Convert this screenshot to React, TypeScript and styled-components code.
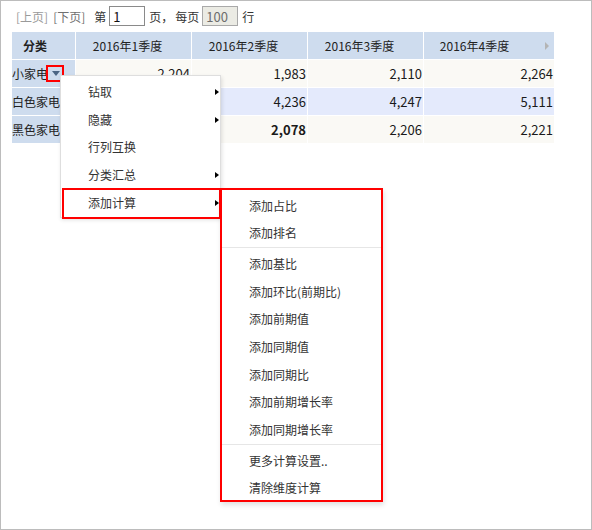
import React from "react";
import styled, { createGlobalStyle } from "styled-components";

const GlobalStyle = createGlobalStyle`
  html, body {
    margin: 0;
    padding: 0;
    background: #fff;
  }
  body {
    font-family: "Noto Sans CJK SC", "Noto Sans", sans-serif;
    font-size: 12px;
    color: #333;
  }
`;

type Tone = "cream" | "blue";

type DataRow = {
  name: string;
  values: string[];
  tone: Tone;
  boldAt?: number;
};

type MenuEntry = {
  label: string;
  hasSub?: boolean;
  active?: boolean;
};

const quarters = ["2016年1季度", "2016年2季度", "2016年3季度", "2016年4季度"];

const rows: DataRow[] = [
  { name: "小家电", values: ["2,204", "1,983", "2,110", "2,264"], tone: "cream" },
  { name: "白色家电", values: ["4,018", "4,236", "4,247", "5,111"], tone: "blue" },
  { name: "黑色家电", values: ["2,137", "2,078", "2,206", "2,221"], tone: "cream", boldAt: 1 },
];

const menuEntries: MenuEntry[] = [
  { label: "钻取", hasSub: true },
  { label: "隐藏", hasSub: true },
  { label: "行列互换" },
  { label: "分类汇总", hasSub: true },
  { label: "添加计算", hasSub: true, active: true },
];

const calcGroups = [
  ["添加占比", "添加排名"],
  ["添加基比", "添加环比(前期比)", "添加前期值", "添加同期值", "添加同期比", "添加前期增长率", "添加同期增长率"],
  ["更多计算设置..", "清除维度计算"],
];

const toneColors: Record<Tone, string> = {
  cream: "#faf9f5",
  blue: "#e4eafc",
};

const Frame = styled.div`
  position: relative;
  box-sizing: border-box;
  width: 592px;
  height: 530px;
  border: 1px solid #bcbcbc;
  padding: 5px 0 0 11px;
`;

const Pager = styled.div`
  display: flex;
  align-items: center;
  height: 20px;
  padding-left: 4px;
  white-space: nowrap;
`;

const PageLink = styled.span<{ $disabled?: boolean; $gap?: number }>`
  color: ${(p) => (p.$disabled ? "#9a9a9a" : "#707070")};
  margin-left: ${(p) => p.$gap ?? 0}px;
  cursor: ${(p) => (p.$disabled ? "default" : "pointer")};
`;

const PagerText = styled.span<{ $gap?: number }>`
  color: #333;
  margin-left: ${(p) => p.$gap ?? 0}px;
`;

const PageInput = styled.input`
  box-sizing: border-box;
  width: 36px;
  height: 20px;
  margin: 0 0 0 3px;
  padding: 0 3px;
  border: 1px solid #8a8a8a;
  font-family: inherit;
  font-size: 13px;
  color: #111;
  background: #fff;
  outline: none;

  &:disabled {
    background: #ebebe4;
    border-color: #a9a9a9;
    color: #6d6d6d;
  }
`;

const Grid = styled.div`
  display: grid;
  grid-template-columns: 63px 115px 115px 115px 130px;
  grid-auto-rows: 27px;
  gap: 1px;
  width: 542px;
  margin-top: 6px;
`;

const HeadCell = styled.div<{ $padRight?: number; $strong?: boolean }>`
  display: flex;
  align-items: center;
  justify-content: center;
  padding-right: ${(p) => p.$padRight ?? 12}px;
  background: #cedcee;
  color: #222;
  font-weight: ${(p) => (p.$strong ? 700 : 400)};
  white-space: nowrap;
`;

const HeadLabel = styled.span`
  flex: 1;
  text-align: center;
`;

const ScrollArrow = styled.span`
  display: flex;
  align-items: center;
  width: 29px;
  height: 100%;
  padding-left: 20px;
  box-sizing: border-box;

  &::before {
    content: "";
    border-left: 4px solid #b4b4b4;
    border-top: 4px solid transparent;
    border-bottom: 4px solid transparent;
  }
`;

const NameCell = styled.div`
  display: flex;
  align-items: center;
  background: #cedcee;
  color: #222;
  white-space: nowrap;
`;

const ValueCell = styled.div<{ $tone: Tone; $bold?: boolean }>`
  display: flex;
  align-items: center;
  justify-content: flex-end;
  padding-right: 1px;
  background: ${(p) => toneColors[p.$tone]};
  color: #1a1a1a;
  font-size: 13px;
  font-weight: ${(p) => (p.$bold ? 700 : 400)};
`;

const Toggle = styled.span`
  position: relative;
  display: inline-flex;
  align-items: center;
  justify-content: center;
  box-sizing: border-box;
  width: 18px;
  height: 17px;
  margin-left: -2px;
  border: 2px solid #ff0000;
  cursor: pointer;

  &::before {
    content: "";
    margin-left: 2px;
    border-top: 5px solid #4b6584;
    border-left: 4.5px solid transparent;
    border-right: 4.5px solid transparent;
  }
`;

const Menu = styled.div`
  position: absolute;
  left: 12px;
  top: 8px;
  z-index: 10;
  box-sizing: border-box;
  width: 161px;
  padding-bottom: 3px;
  background: #fff;
  border: 1px solid #dedede;
  box-shadow: 1px 2px 4px rgba(0, 0, 0, 0.12);
`;

const SubMenu = styled.div`
  position: absolute;
  left: 159px;
  top: 1px;
  z-index: 11;
  box-sizing: border-box;
  width: 163px;
  background: #fff;
  border: 2px solid #ff0000;
  box-shadow: 1px 3px 5px rgba(0, 0, 0, 0.12);
`;

const MenuItem = styled.div`
  position: relative;
  display: flex;
  align-items: center;
  box-sizing: border-box;
  height: 27.7px;
  padding: 4px 1px 0 27px;
  line-height: 24px;
  color: #333;
  white-space: nowrap;
  cursor: pointer;
`;

const ItemLabel = styled.span`
  flex: 1;
`;

const SubArrow = styled.span`
  border-left: 4px solid #000;
  border-top: 3.5px solid transparent;
  border-bottom: 3.5px solid transparent;
`;

const Highlight = styled.span`
  position: absolute;
  left: 1px;
  right: -1px;
  top: 1px;
  height: 31px;
  box-sizing: border-box;
  border: 2px solid #ff0000;
  pointer-events: none;
`;

const Divider = styled.div`
  height: 1px;
  margin-top: 2px;
  background: #e6e6e6;
`;

const CalcMenu = () => (
  <SubMenu>
    {calcGroups.map((group, gi) => (
      <React.Fragment key={gi}>
        {gi > 0 && <Divider />}
        {group.map((label) => (
          <MenuItem key={label}>
            <ItemLabel>{label}</ItemLabel>
          </MenuItem>
        ))}
      </React.Fragment>
    ))}
  </SubMenu>
);

const ContextMenu = () => (
  <Menu>
    {menuEntries.map((entry) => (
      <MenuItem key={entry.label}>
        <ItemLabel>{entry.label}</ItemLabel>
        {entry.hasSub && <SubArrow />}
        {entry.active && <Highlight />}
        {entry.active && <CalcMenu />}
      </MenuItem>
    ))}
  </Menu>
);

export default function App() {
  return (
    <Frame>
      <GlobalStyle />
      <Pager>
        <PageLink $disabled>[上页]</PageLink>
        <PageLink $gap={5}>[下页]</PageLink>
        <PagerText $gap={9}>第</PagerText>
        <PageInput defaultValue="1" />
        <PagerText $gap={4}>页，</PagerText>
        <PagerText $gap={2}>每页</PagerText>
        <PageInput defaultValue="100" disabled />
        <PagerText $gap={4}>行</PagerText>
      </Pager>

      <Grid>
        <HeadCell $padRight={17} $strong>
          分类
        </HeadCell>
        {quarters.map((q, i) =>
          i === quarters.length - 1 ? (
            <HeadCell key={q} $padRight={0}>
              <HeadLabel>{q}</HeadLabel>
              <ScrollArrow />
            </HeadCell>
          ) : (
            <HeadCell key={q}>{q}</HeadCell>
          )
        )}

        {rows.map((row, ri) => (
          <React.Fragment key={row.name}>
            <NameCell>
              {row.name}
              {ri === 0 && (
                <Toggle>
                  <ContextMenu />
                </Toggle>
              )}
            </NameCell>
            {row.values.map((v, ci) => (
              <ValueCell key={ci} $tone={row.tone} $bold={row.boldAt === ci}>
                {v}
              </ValueCell>
            ))}
          </React.Fragment>
        ))}
      </Grid>
    </Frame>
  );
}
